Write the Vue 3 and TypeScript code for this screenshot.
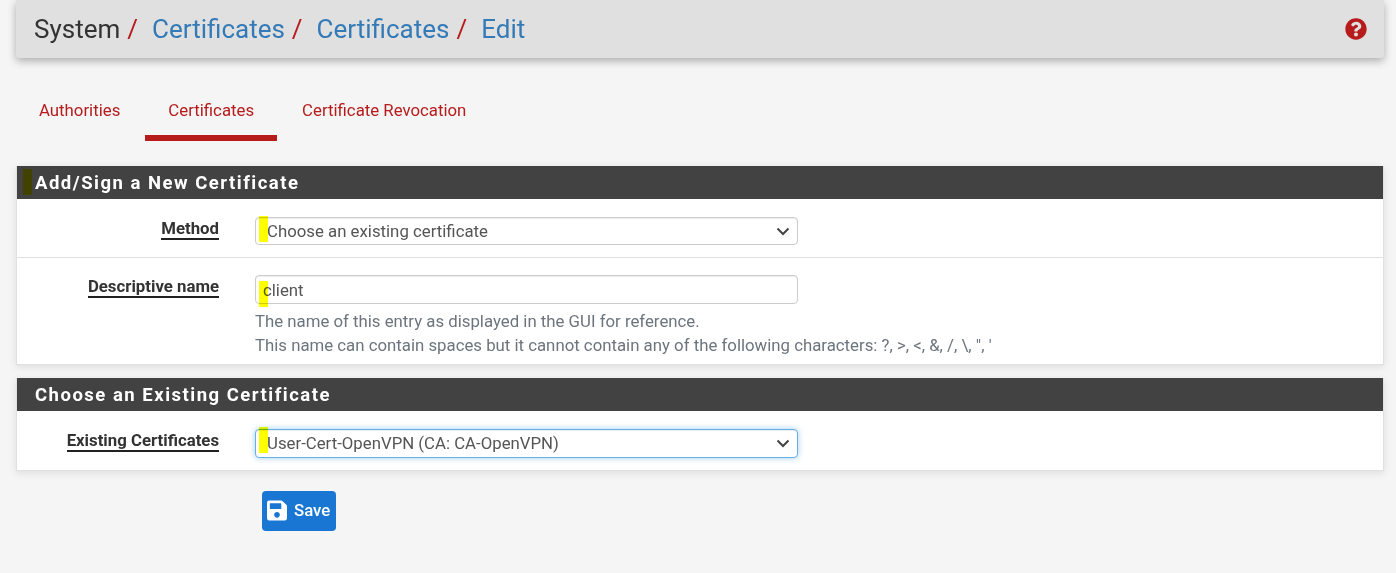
<script setup lang="ts">
const tabs = [
  { label: 'Authorities', active: false },
  { label: 'Certificates', active: true },
  { label: 'Certificate Revocation', active: false },
]
const crumbs = ['Certificates', 'Certificates', 'Edit']
</script>

<template>
  <div class="page">
    <header class="crumbbar">
      <ol class="crumbs">
        <li class="crumb plain">System</li>
        <li v-for="(c, i) in crumbs" :key="i" class="crumb">
          <span class="sep">/</span><a class="link">{{ c }}</a>
        </li>
      </ol>
      <svg class="help" viewBox="0 0 512 512" aria-hidden="true">
        <path fill="#b71c1c" d="M504 256c0 137-111 248-248 248S8 393 8 256C8 119 119 8 256 8s248 111 248 248zM262.700 90c-54.500 0-89.300 23-116.600 63.800-3.500 5.300-2.400 12.400 2.700 16.300l34.700 26.300c5.200 3.900 12.600 3 16.700-2.100 17.900-22.700 30.100-35.800 57.300-35.800 20.400 0 45.700 13.100 45.700 33 0 15-12.400 22.700-32.600 34-23.600 13.200-54.800 29.700-54.800 70.900V302c0 6.600 5.400 12 12 12h56c6.600 0 12-5.400 12-12v-1.300c0-28.600 83.500-29.800 83.500-107.100C378.300 135.300 317.800 90 262.700 90zM256 339c-25.500 0-46.200 20.700-46.200 46.200 0 25.500 20.700 46.200 46.200 46.200s46.200-20.700 46.200-46.200c0-25.500-20.700-46.200-46.200-46.200z"/>
      </svg>
    </header>

    <nav class="tabs">
      <a v-for="t in tabs" :key="t.label" class="tab" :class="{ active: t.active }">{{ t.label }}</a>
    </nav>

    <section class="panel first">
      <h2 class="panel-head"><span class="mark dark"></span>Add/Sign a New Certificate</h2>
      <div class="row">
        <label class="lbl"><span>Method</span></label>
        <div class="field">
          <div class="control">
            <span class="mark m1"></span>
            <select class="input select">
              <option>Choose an existing certificate</option>
            </select>
            <svg class="chev" viewBox="0 0 14 9" aria-hidden="true"><path d="M1.500 1.500 7 7l5.500-5.500" fill="none" stroke="#444" stroke-width="2"/></svg>
          </div>
        </div>
      </div>
      <div class="row tall">
        <label class="lbl"><span>Descriptive name</span></label>
        <div class="field">
          <div class="control big">
            <span class="mark m2"></span>
            <input class="input text" value="client" />
          </div>
          <p class="hint">The name of this entry as displayed in the GUI for reference.<br />This name can contain spaces but it cannot contain any of the following characters: ?, &gt;, &lt;, &amp;, /, \, ", '</p>
        </div>
      </div>
    </section>

    <section class="panel second">
      <h2 class="panel-head">Choose an Existing Certificate</h2>
      <div class="row">
        <label class="lbl"><span>Existing Certificates</span></label>
        <div class="field">
          <div class="control big">
            <span class="mark m3"></span>
            <select class="input select focus">
              <option>User-Cert-OpenVPN (CA: CA-OpenVPN)</option>
            </select>
            <svg class="chev" viewBox="0 0 14 9" aria-hidden="true"><path d="M1.500 1.500 7 7l5.500-5.500" fill="none" stroke="#444" stroke-width="2"/></svg>
          </div>
        </div>
      </div>
    </section>

    <div class="actions">
      <button class="save" type="button">
        <svg class="disk" viewBox="0 0 448 512" aria-hidden="true">
          <path fill="#fff" d="M433.900 129.900l-83.900-83.900A48 48 0 0 0 316.100 32H48C21.500 32 0 53.500 0 80v352c0 26.500 21.500 48 48 48h352c26.500 0 48-21.500 48-48V163.900a48 48 0 0 0-14.100-34zM224 416c-35.300 0-64-28.700-64-64 0-35.300 28.700-64 64-64s64 28.700 64 64c0 35.300-28.700 64-64 64zm96-304.500V212c0 6.600-5.400 12-12 12H76c-6.600 0-12-5.400-12-12V108c0-6.600 5.400-12 12-12h228.500c3.200 0 6.200 1.300 8.500 3.500l3.500 3.500c2.200 2.200 3.500 5.300 3.500 8.500z"/>
        </svg>
        Save
      </button>
    </div>
  </div>
</template>

<style>
html, body { margin: 0; background: #f5f5f5; }
</style>

<style scoped>
.page {
  box-sizing: border-box;
  height: 573px;
  padding: 0 12px 0 16px;
  background: #f5f5f5;
  font-family: Roboto, "Liberation Sans", sans-serif;
  overflow: hidden;
}
.crumbbar {
  height: 58px;
  display: flex;
  align-items: center;
  justify-content: space-between;
  padding: 0 17px 0 18px;
  background: #e0e0e0;
  border-radius: 0 0 3px 3px;
  box-shadow: 0 3px 9px rgba(0, 0, 0, 0.3);
}
.crumbs { display: flex; margin: 0; padding: 0; list-style: none; font-size: 26px; line-height: 30px; }
.crumb { color: #333; white-space: pre; }
.sep { color: #b71c1c; margin: 0 14px 0 7px; }
.link { color: #337ab7; }
.help { width: 22px; height: 22px; }
.tabs { display: flex; gap: 2px; height: 51px; margin-top: 32px; }
.tab {
  box-sizing: border-box;
  height: 51px;
  padding: 11px 23px 0;
  font-size: 16.800px;
  line-height: 18px;
  color: #b71c1c;
}
.tab.active { border-bottom: 6px solid #b71c1c; }
.panel {
  position: relative;
  background: #fff;
  border: 1px solid #e0e0e0;
  border-top: 0;
  box-shadow: 0 2px 8px rgba(0, 0, 0, 0.1);
}
.first { margin-top: 25px; height: 198px; }
.second { margin-top: 13px; height: 92px; }
.panel-head {
  height: 33px;
  margin: 0;
  padding-left: 18px;
  background: #424242;
  color: #fff;
  font-size: 18.500px;
  font-weight: 700;
  line-height: 34px;
  letter-spacing: 1.500px;
}
.row { display: flex; height: 59px; box-sizing: border-box; padding-top: 18px; border-bottom: 1px solid #e0e0e0; }
.row:last-child { border-bottom: 0; }
.row.tall { height: 106px; padding-top: 17px; }
.lbl { width: 202px; text-align: right; font-size: 16.800px; font-weight: 700; color: #333; line-height: 20px; padding-top: 1px; }
.lbl span { border-bottom: 2px solid #212121; }
.field { margin-left: 36px; width: 543px; }
.control { position: relative; width: 543px; height: 28px; }
.control.big { height: 29px; }
.input {
  box-sizing: border-box;
  width: 100%;
  height: 100%;
  padding: 0 30px 0 8px;
  margin: 0;
  background: #fff;
  border: 1px solid #ccc;
  border-radius: 4px;
  box-shadow: inset 0 1px 1px rgba(0, 0, 0, 0.075);
  color: #555;
  font: 16.800px Roboto, sans-serif;
  outline: 0;
  display: block;
}
.select { appearance: none; padding-left: 11px; }
.text { padding-left: 7px; }
.focus {
  padding-bottom: 2px;
  border-color: #66afe9;
  box-shadow: inset 0 1px 1px rgba(0, 0, 0, 0.075), 0 0 6px rgba(102, 175, 233, 0.6);
}
.chev { position: absolute; right: 8px; top: 10px; width: 14px; height: 9px; pointer-events: none; }
.mark {
  position: absolute;
  left: 4px;
  width: 9px;
  height: 26px;
  background: #ffff00;
  z-index: 1;
  mix-blend-mode: multiply;
}
.m1 { top: -1px; }
.m2 { top: 6px; }
.m3 { top: -2px; }
.mark.dark { left: 6px; top: 3px; }
.hint { margin: 5px 0 0; font-size: 16.800px; line-height: 24px; color: #6c757d; white-space: nowrap; }
.actions { padding: 20px 0 0 246px; }
.save {
  display: flex;
  align-items: center;
  gap: 6px;
  box-sizing: border-box;
  width: 74px;
  height: 40px;
  padding: 0 0 2px 5px;
  border: 0;
  border-radius: 4px;
  background: #1976d2;
  color: #fff;
  font: 500 16.800px Roboto, sans-serif;
}
.disk { width: 20px; height: 23px; flex: none; margin-right: 1px; }
</style>
